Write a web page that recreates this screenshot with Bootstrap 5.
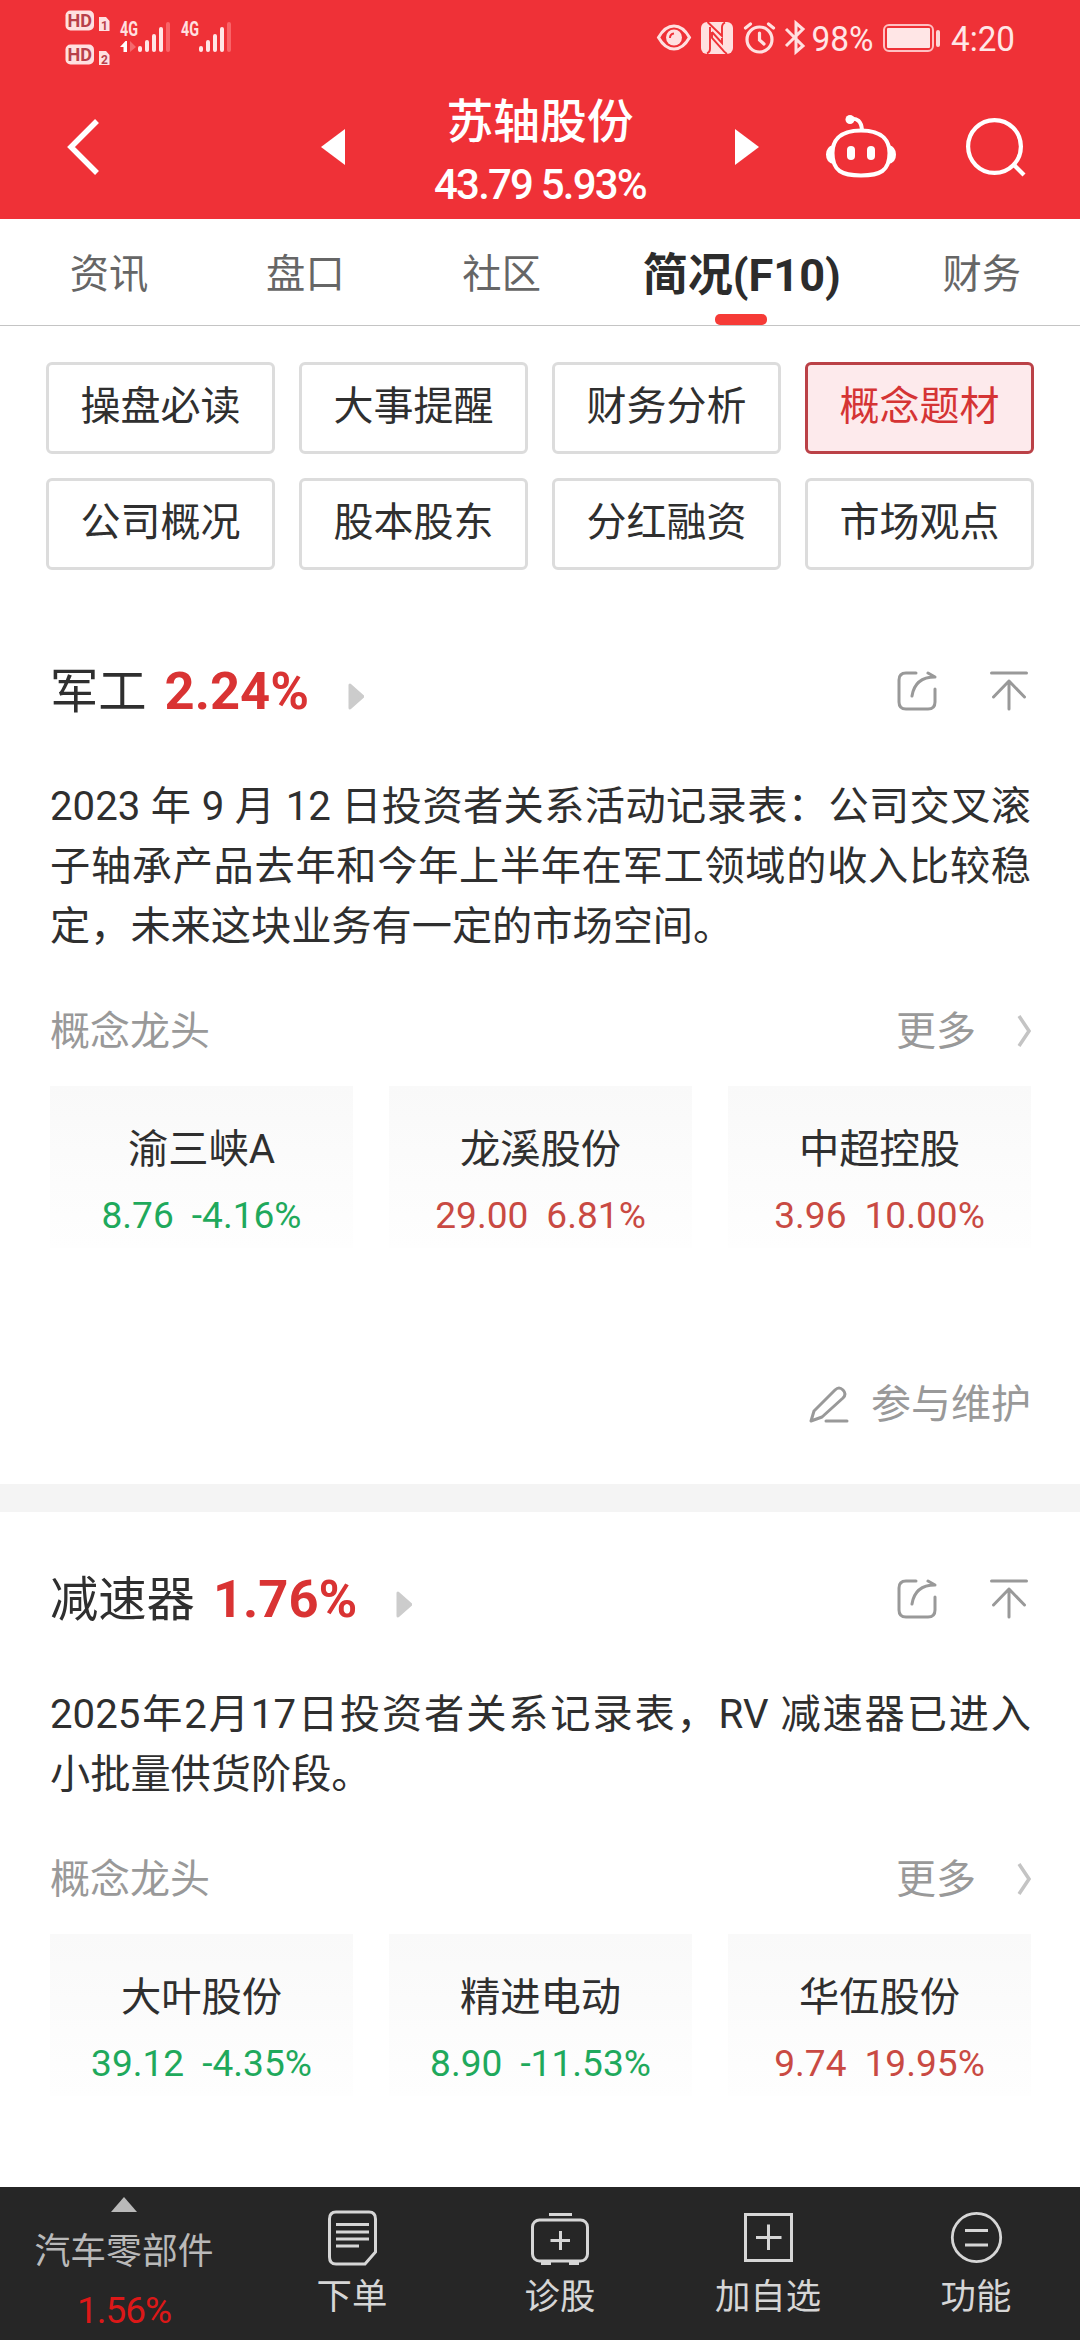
<!DOCTYPE html>
<html lang="zh-CN">
<head>
<meta charset="utf-8">
<meta name="viewport" content="width=device-width, initial-scale=1">
<title>苏轴股份</title>
<link href="https://cdn.jsdelivr.net/npm/bootstrap@5.3.0/dist/css/bootstrap.min.css" rel="stylesheet">
<style>
  body { font-family: Roboto, "Noto Sans CJK SC", sans-serif; color: #2f2f2f; font-size: 40px; line-height: 1; width: 1080px; height: 2340px; overflow: hidden; background: #fff; }
  svg { display: block; flex: none; overflow: visible; }
  .app-head { background: #ef3137; height: 219px; color: #fff; }
  .status { height: 75px; padding: 0 66px 0 65px; color: #ffe6e6; }
  .status-icons { height: 75px; }
  .bar { height: 144px; padding: 0 56px 0 67px; }
  .head-mid { padding-top: 9px; }
  .head-name { font-size: 46.8px; line-height: 54px; font-weight: 500; }
  .head-quote { font-size: 42px; line-height: 46px; font-weight: 500; letter-spacing: -1.8px; margin-top: 13px; }
  .gap-prev { margin-left: 222px; } .gap-bot { margin-left: 67px; } .gap-find { margin-left: 70px; }
  .tabs { height: 107px; border-bottom: 1px solid #c4c4c4; color: #666; font-size: 39.3px; padding-left: 11px; }
  .tabs .nav-link { padding: 3px 0 0; color: #666; line-height: 107px; height: 106px; width: 196.3px; text-align: center; }
  .tabs .nav-link.active { width: 284px; font-size: 45.1px; font-weight: 700; color: #2c2c2c; position: relative; }
  .tabs .nav-link.active::after { content: ""; position: absolute; left: 115px; bottom: 0; width: 52px; height: 11px; border-radius: 5px; background: #f63b37; }
  .pills { padding: 36px 46px 0; display: grid; grid-template-columns: repeat(4, 1fr); gap: 24px; }
  .pills .btn { height: 92px; border: 3px solid #dcdcdc; border-radius: 6px; padding: 0 0 2px; font-size: 40px; line-height: 84px; color: #2f2f2f; background: #fff; }
  .pills .btn.active { border-color: #bb4147; background: #fdeaec; color: #d53434; }
  .topic { padding: 0 49px 0 50px; }
  .topic-first { padding-top: 81px; } .topic-next { padding-top: 47px; }
  .topic-head { height: 80px; }
  .topic-name { font-size: 48.3px; line-height: 78px; padding-top: 2px; }
  .topic-pct { font-size: 52.5px; line-height: 79px; padding-top: 1px; font-weight: 700; color: #d93333; margin-left: 18px; }
  .ico-caret { margin: 10px 0 0 39px; } .ico-top { margin: 0 3px 0 53px; } .ico-more { margin: 0 0 0 41px; }
  .topic-text { font-size: 40.2px; line-height: 60px; text-align: justify; margin: 46px 0 0; }
  .muted { color: #999; }
  .lead-row { height: 60px; line-height: 60px; margin-top: 44px; }
  .lead-row span { padding-top: 2px; }
  .edit-row { margin-top: 126px; } .edit-row span { margin-left: 23px; }
  .leaders { display: grid; grid-template-columns: repeat(3, 303px); justify-content: space-between; margin-top: 25px; }
  .stock { height: 162px; background: linear-gradient(#f9f9f9, #fefefe); text-align: center; padding-top: 36px; }
  .stock-name { font-size: 40.3px; line-height: 56px; height: 56px; }
  .stock-num { font-size: 37.1px; line-height: 44px; height: 44px; margin-top: 16px; display: flex; justify-content: center; gap: 18px; }
  .up { color: #c94a43; } .down { color: #1fa95c; }
  .band { height: 28px; background: #f4f4f4; margin-top: 50px; }
  .foot { height: 153px; background: #262626; color: #d6d6d6; font-size: 35.4px; }
  .foot-item { width: 208px; padding-top: 23px; }
  .foot-item svg { height: 56px; }
  .foot-item span { line-height: 48px; margin-top: 7px; }
  .foot-sector { width: 248px; padding-top: 10px; color: #b9b9b9; }
  .foot-sector .nm { font-size: 35.8px; line-height: 48px; margin-top: 16px; }
  .foot-sector .pc { color: #dc1818; font-size: 37px; line-height: 44px; margin-top: 13px; letter-spacing: -1px; }
</style>
</head>
<body class="d-flex flex-column">

<svg width="0" height="0" class="position-absolute" aria-hidden="true">
  <symbol id="share" viewBox="0 0 40 40"><g fill="none" stroke="#999" stroke-width="3" stroke-linecap="round" stroke-linejoin="round"><path d="M19 2H9Q2 2 2 9V31Q2 38 9 38H31Q38 38 38 31V18"/><path d="M15 25C17 12 25 6 38 6L31 2"/></g></symbol>
  <symbol id="totop" viewBox="0 0 38 40"><g fill="none" stroke="#999" stroke-width="3" stroke-linecap="round" stroke-linejoin="round"><path d="M1.500 2H36.500M19 38V10M3.500 26L19 10L34.500 26"/></g></symbol>
  <symbol id="caret" viewBox="0 0 16 27"><path d="M2 2V25L15 13.500Z" fill="#ccc" stroke="#ccc" stroke-width="3" stroke-linejoin="round"/></symbol>
  <symbol id="more" viewBox="0 0 14 32"><path d="M2 1L12 16L2 31" fill="none" stroke="#c4c4c4" stroke-width="3.500"/></symbol>
</svg>

<header class="app-head">
  <div class="status d-flex align-items-start justify-content-between">
    <svg width="170" height="75" viewBox="65 0 170 75" font-family="Roboto, sans-serif">
      <g fill="#ffe0e0">
        <rect x="65.500" y="10.500" width="28.500" height="20" rx="5"/><rect x="65.500" y="44.500" width="28.500" height="20" rx="5"/>
        <path d="M99 17H106L109.500 21V31H99ZM99 51H106L109.500 55V65H99Z"/>
      </g>
      <g fill="#b8404a" font-weight="700">
        <text x="67.500" y="27" font-size="18" textLength="24.500" lengthAdjust="spacingAndGlyphs">HD</text>
        <text x="67.500" y="61" font-size="18" textLength="24.500" lengthAdjust="spacingAndGlyphs">HD</text>
        <text x="101" y="29.500" font-size="12">1</text><text x="101" y="63.500" font-size="12">2</text>
      </g>
      <g fill="#ffe0e0" font-weight="700" font-size="20">
        <text x="120" y="36" textLength="18" lengthAdjust="spacingAndGlyphs">4G</text>
        <text x="181" y="36" textLength="18" lengthAdjust="spacingAndGlyphs">4G</text>
      </g>
      <path d="M120 47L125.500 41H127V52H123.500V47Z" fill="#fff"/><path d="M130 41V52L136 47Z" fill="#f4696d"/>
      <g stroke="#ffe6e6" stroke-width="4" stroke-linecap="round">
        <path d="M140 48V50M147 42V50M154 36V50M161 29V50M201 48V50M208 42V50M215 36V50M222 29V50"/>
        <path d="M168 24V50M229 24V50" stroke="#f96468"/>
      </g>
    </svg>
    <div class="status-icons d-flex align-items-center">
      <svg width="34" height="27" viewBox="0 0 34 27"><path d="M1.500 13.500Q8 2 17 2T32.500 13.500Q26 25 17 25T1.500 13.500Z" fill="none" stroke="#ffe0e0" stroke-width="3"/><circle cx="17" cy="13.500" r="8" fill="#ffe0e0"/><path d="M13 14Q13 10 17 9.500" stroke="#ef3137" stroke-width="2" fill="none"/></svg>
      <svg style="margin-left:10px" width="32" height="32" viewBox="0 0 32 32"><rect width="32" height="32" rx="6" fill="#ffe0e0"/><g fill="none" stroke="#ef3137" stroke-width="1.900"><path d="M9 5V27Q9 30 6 31.500M6.500 0L21 14V5Q21 2 24 0.500"/><path d="M11 10L21 21V16M11 10V16L21 27Q23 30 26 32"/></g></svg>
      <svg style="margin-left:11px" width="31" height="32" viewBox="0 0 31 32"><g fill="none" stroke="#ffe0e0" stroke-width="3.200" stroke-linecap="round"><circle cx="15.500" cy="17.500" r="12.500"/><path d="M1.500 6L6.500 2M29.500 6L24.500 2M15.500 11V18L20 22"/></g></svg>
      <svg style="margin-left:10px" width="20" height="33" viewBox="0 0 20 33"><path d="M1 8L18 25L11 31V2L18 8L1 25" fill="none" stroke="#ffe0e0" stroke-width="3"/></svg>
      <svg style="margin-left:6px" width="63" height="40" viewBox="0 0 63 40"><text x="0.500" y="32.500" font-size="35.500" fill="#ffe6e6" textLength="62" lengthAdjust="spacingAndGlyphs">98%</text></svg>
      <svg style="margin-left:9px" width="57" height="28" viewBox="0 0 57 28"><rect x="1" y="1" width="49" height="26" rx="5" fill="none" stroke="#ffc0c2" stroke-width="2"/><rect x="4" y="4" width="43" height="20" rx="1" fill="#ffe6e6"/><rect x="53" y="6" width="4" height="17" rx="2" fill="#ffd6d6"/></svg>
      <svg style="margin-left:10px" width="64" height="40" viewBox="0 0 64 40"><text x="1" y="32.500" font-size="35" fill="#ffe6e6" textLength="64" lengthAdjust="spacingAndGlyphs">4:20</text></svg>
    </div>
  </div>
  <div class="bar d-flex align-items-center">
    <svg width="32" height="56" viewBox="0 0 32 56"><path d="M30 2L4 28L30 54" fill="none" stroke="#fff" stroke-width="5.500"/></svg>
    <svg class="gap-prev" width="24" height="36" viewBox="0 0 24 36"><path d="M24 0V36L0 18Z" fill="#fff"/></svg>
    <div class="head-mid text-center flex-grow-1">
      <div class="head-name">苏轴股份</div>
      <div class="head-quote">43.79 5.93%</div>
    </div>
    <svg width="24" height="36" viewBox="0 0 24 36"><path d="M0 0V36L24 18Z" fill="#fff"/></svg>
    <svg class="gap-bot" width="70" height="64" viewBox="0 0 70 64"><g fill="none" stroke="#fff" stroke-width="4"><path d="M24 4Q35 2 36 15"/><path d="M35 15.500C58 15.500 63.500 27 63.500 38C63.500 56 54 60.500 35 60.500S6.500 56 6.500 38C6.500 27 12 15.500 35 15.500Z"/></g><circle cx="24" cy="4.500" r="4.500" fill="#fff"/><path d="M7 30Q0 32 0 39.500T7 49ZM63 30Q70 32 70 39.500T63 49Z" fill="#fff"/><rect x="21" y="31" width="8" height="14" rx="4" fill="#fff"/><rect x="41" y="31" width="8" height="14" rx="4" fill="#fff"/></svg>
    <svg class="gap-find" width="58" height="59" viewBox="0 0 58 59"><g fill="none" stroke="#fff" stroke-width="4.200"><circle cx="28.500" cy="28.500" r="26.400"/><path d="M47 46L58 57"/></g></svg>
  </div>
</header>

<nav class="tabs nav flex-nowrap">
  <a class="nav-link">资讯</a><a class="nav-link">盘口</a><a class="nav-link">社区</a><a class="nav-link active">简况(F10)</a><a class="nav-link">财务</a>
</nav>

<div class="pills">
  <button class="btn">操盘必读</button><button class="btn">大事提醒</button><button class="btn">财务分析</button><button class="btn active">概念题材</button>
  <button class="btn">公司概况</button><button class="btn">股本股东</button><button class="btn">分红融资</button><button class="btn">市场观点</button>
</div>

<section class="topic topic-first">
  <div class="topic-head d-flex align-items-center">
    <span class="topic-name">军工</span><span class="topic-pct">2.24%</span>
    <svg class="ico-caret" width="16" height="27"><use href="#caret"/></svg>
    <svg class="ms-auto" width="40" height="40"><use href="#share"/></svg>
    <svg class="ico-top" width="38" height="40"><use href="#totop"/></svg>
  </div>
  <p class="topic-text">2023 年 9 月 12 日投资者关系活动记录表：公司交叉滚子轴承产品去年和今年上半年在军工领域的收入比较稳定，未来这块业务有一定的市场空间。</p>
  <div class="lead-row d-flex align-items-center muted">
    <span>概念龙头</span><span class="ms-auto">更多</span><svg class="ico-more" width="14" height="32"><use href="#more"/></svg>
  </div>
  <div class="leaders">
    <div class="stock"><div class="stock-name">渝三峡A</div><div class="stock-num down"><span>8.76</span><span>-4.16%</span></div></div>
    <div class="stock"><div class="stock-name">龙溪股份</div><div class="stock-num up"><span>29.00</span><span>6.81%</span></div></div>
    <div class="stock"><div class="stock-name">中超控股</div><div class="stock-num up"><span>3.96</span><span>10.00%</span></div></div>
  </div>
  <div class="lead-row edit-row d-flex align-items-center justify-content-end muted">
    <svg width="39" height="37" viewBox="0 0 39 37"><g fill="none" stroke="#999" stroke-width="3" stroke-linecap="round" stroke-linejoin="round"><path d="M2 35L5 25L26 4Q30 0 34 4T34 12L13 31ZM17 35H38"/></g></svg>
    <span>参与维护</span>
  </div>
</section>
<div class="band"></div>
<section class="topic topic-next">
  <div class="topic-head d-flex align-items-center">
    <span class="topic-name">减速器</span><span class="topic-pct">1.76%</span>
    <svg class="ico-caret" width="16" height="27"><use href="#caret"/></svg>
    <svg class="ms-auto" width="40" height="40"><use href="#share"/></svg>
    <svg class="ico-top" width="38" height="40"><use href="#totop"/></svg>
  </div>
  <p class="topic-text">2025年2月17日投资者关系记录表，RV 减速器已进入小批量供货阶段。</p>
  <div class="lead-row d-flex align-items-center muted">
    <span>概念龙头</span><span class="ms-auto">更多</span><svg class="ico-more" width="14" height="32"><use href="#more"/></svg>
  </div>
  <div class="leaders">
    <div class="stock"><div class="stock-name">大叶股份</div><div class="stock-num down"><span>39.12</span><span>-4.35%</span></div></div>
    <div class="stock"><div class="stock-name">精进电动</div><div class="stock-num down"><span>8.90</span><span>-11.53%</span></div></div>
    <div class="stock"><div class="stock-name">华伍股份</div><div class="stock-num up"><span>9.74</span><span>19.95%</span></div></div>
  </div>
</section>

<footer class="foot d-flex mt-auto">
  <div class="foot-sector d-flex flex-column align-items-center">
    <svg width="26" height="15" viewBox="0 0 26 15"><path d="M13 0L26 15H0Z" fill="#b9b9b9"/></svg>
    <span class="nm">汽车零部件</span><span class="pc">1.56%</span>
  </div>
  <div class="foot-item d-flex flex-column align-items-center">
    <svg width="49" viewBox="0 0 49 56"><g fill="none" stroke="#d6d6d6" stroke-width="3"><path d="M8 2H41Q47.500 2 47.500 9V42L37 54H8Q1.500 54 1.500 47V9Q1.500 2 8 2Z"/><path d="M8 14.500H41M8 22H41M8 29H41M8 36H31"/></g></svg>
    <span>下单</span>
  </div>
  <div class="foot-item d-flex flex-column align-items-center">
    <svg width="58" viewBox="0 0 58 56"><g fill="none" stroke="#d6d6d6" stroke-width="3"><rect x="1.500" y="10" width="55" height="41" rx="7"/><path d="M18 4.500H41M29.500 21V40M19.500 30.500H39"/><path d="M10 53H20M38 53H48" stroke-width="4"/></g></svg>
    <span>诊股</span>
  </div>
  <div class="foot-item d-flex flex-column align-items-center">
    <svg width="49" viewBox="0 0 49 56"><path d="M1.500 4.500H47.500V50.500H1.500ZM24.500 14.500V40M12 27.500H37.500" fill="none" stroke="#d6d6d6" stroke-width="3"/></svg>
    <span>加自选</span>
  </div>
  <div class="foot-item d-flex flex-column align-items-center">
    <svg width="51" viewBox="0 0 51 56"><g fill="none" stroke="#d6d6d6" stroke-width="2.800"><circle cx="25.500" cy="27.500" r="24.200"/><path d="M14 20.500H37M14 35H37"/></g></svg>
    <span>功能</span>
  </div>
</footer>
<script src="https://cdn.jsdelivr.net/npm/bootstrap@5.3.0/dist/js/bootstrap.bundle.min.js"></script>
</body>
</html>
